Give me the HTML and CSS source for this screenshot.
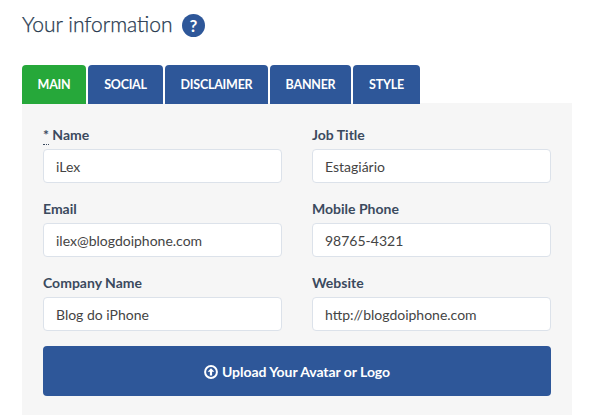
FILE: index.html
```html
<!DOCTYPE html>
<html lang="en">
<head>
<meta charset="utf-8">
<title>Your information</title>
<link rel="stylesheet" href="styles.css">
</head>
<body>
<header class="heading">
  <h1>Your information</h1>
  <span class="help">?</span>
</header>
<nav class="tabs">
  <a class="tab tab-main active">MAIN</a>
  <a class="tab tab-social">SOCIAL</a>
  <a class="tab tab-disclaimer">DISCLAIMER</a>
  <a class="tab tab-banner">BANNER</a>
  <a class="tab tab-style">STYLE</a>
</nav>
<main class="panel">
  <form class="fields">
    <label class="field"><span class="label"><abbr title="required">*</abbr> Name</span><input type="text" value="iLex"></label>
    <label class="field"><span class="label">Job Title</span><input type="text" value="Estagiário"></label>
    <label class="field"><span class="label">Email</span><input type="text" value="ilex@blogdoiphone.com"></label>
    <label class="field"><span class="label">Mobile Phone</span><input type="text" value="98765-4321"></label>
    <label class="field"><span class="label">Company Name</span><input type="text" value="Blog do iPhone"></label>
    <label class="field"><span class="label">Website</span><input type="text" value="http://blogdoiphone.com"></label>
  </form>
  <button class="upload" type="button">
    <svg width="14" height="14" viewBox="0 0 14 14"><circle cx="7" cy="7" r="5.9" fill="none" stroke="#fff" stroke-width="2"/><path fill="#fff" d="M7 3.2L10.4 6.8H8.1V10.6H5.9V6.8H3.6Z"/></svg>
    <span>Upload Your Avatar or Logo</span>
  </button>
</main>
</body>
</html>
```

FILE: styles.css
```css
* { box-sizing: border-box; }
body {
  margin: 0;
  padding: 13px 18px 0 22px;
  height: 415px;
  overflow: hidden;
  background: #fff;
  color: #3b4a5e;
  font: 14px/20px Lato, sans-serif;
}
.heading { display: flex; align-items: center; gap: 10px; height: 24px; margin-bottom: 28px; }
h1 { width: 150px; height: 24px; margin: 0; color: #26384e; font-size: 21px; line-height: 22px; font-weight: 300; -webkit-text-stroke: 0.25px #26384e; white-space: nowrap; }
.help {
  width: 23px; height: 23px; border-radius: 50%;
  background: #2e5799; color: #fff;
  font-size: 17px; font-weight: 700; line-height: 24px; text-align: center;
}
.tabs { display: flex; gap: 2px; height: 38px; }
.tab {
  height: 39px; border-radius: 4px 4px 0 0;
  background: #2e5799; color: #fff;
  font-size: 12.5px; font-weight: 700; line-height: 39px; letter-spacing: -0.25px; text-align: center;
}
.tab-main { width: 64px; }
.tab-social { width: 75px; }
.tab-disclaimer { width: 103px; }
.tab-banner { width: 81px; }
.tab-style { width: 67px; }
.tab.active { background: #26a83a; }
.panel { height: 312px; padding: 22px 21px 0; background: #f6f6f6; }
.fields { display: grid; grid-template-columns: 239px 239px; column-gap: 30px; row-gap: 16px; }
.field { display: flex; flex-direction: column; height: 58px; }
.label { height: 24px; font-weight: 700; line-height: 20px; }
abbr { padding-bottom: 1px; text-decoration: none; border-bottom: 1px dotted #3b4a5e; }
input {
  width: 239px; height: 34px; padding: 1px 12px 0;
  border: 1px solid #dce2ea; border-radius: 4px;
  background: #fff; color: #444; font: 14px/20px Lato, sans-serif;
}
.upload {
  display: flex; align-items: center; justify-content: center; gap: 4px;
  width: 508px; height: 50px; margin-top: 15px; padding: 1px 0 0;
  border: 0; border-radius: 4px;
  background: #2e5799; color: #fff; font: 700 14px/20px Lato, sans-serif; letter-spacing: -0.05px;
}
```
